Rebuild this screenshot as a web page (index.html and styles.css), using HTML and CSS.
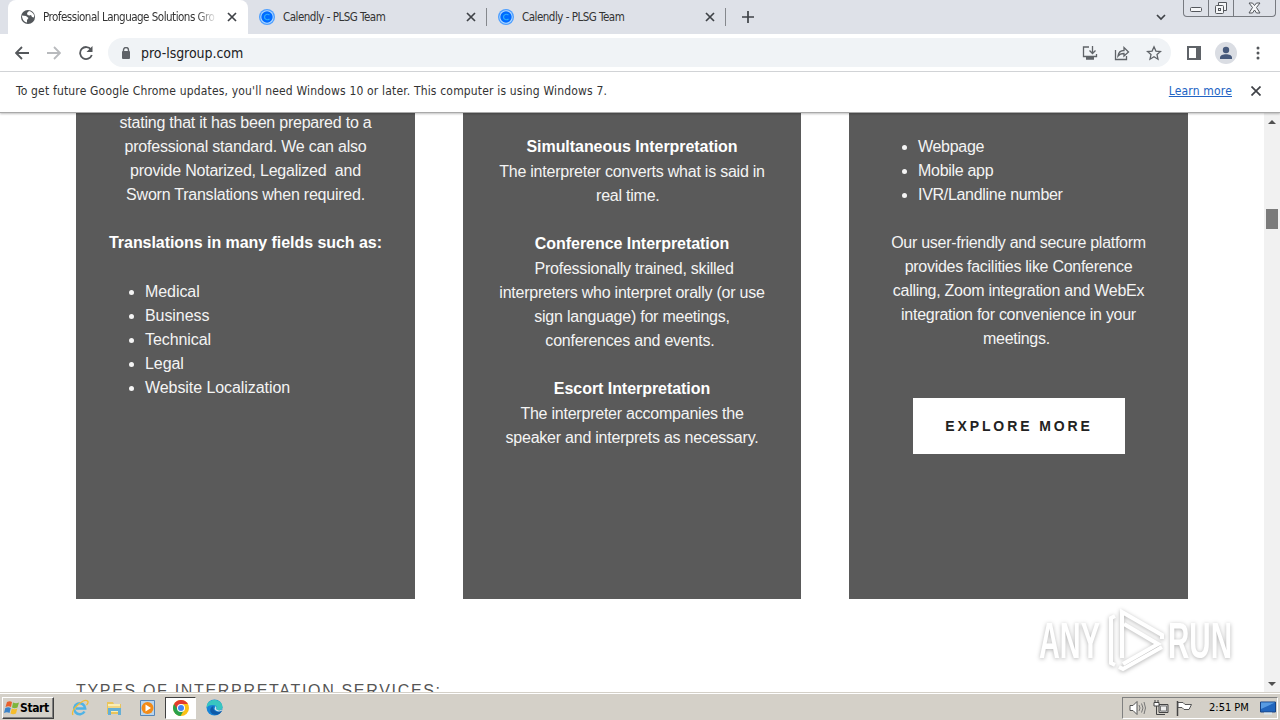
FILE: index.html
```html
<!DOCTYPE html>
<html lang="en">
  <head>
    <meta charset="UTF-8" />
    <title>Professional Language Solutions Group</title>
    <link rel="stylesheet" href="styles.css">
  </head>
  <body>
    <div class="tabs">
      <div class="tab active">
        <svg class="favicon" width="16" height="16" viewBox="0 0 16 16"><circle cx="8" cy="8" r="7" fill="#53575b"/><path d="M2 6.500l4 .5 2.500 2L7 11v2.500C4 13 2 10 2 6.500zM9 2L7 4l.5 2 2 .5L11 6l1 2 2 .5V6c-1-2-2.500-3.500-5-4z" fill="#fff"/></svg>
        <span class="title fade">Professional Language Solutions Gro</span>
        <svg class="close" width="10" height="10" viewBox="0 0 10 10"><path d="M1 1l8 8M9 1L1 9"/></svg>
      </div>
      <div class="tab second">
        <svg class="favicon" width="16" height="16" viewBox="0 0 16 16"><circle cx="8" cy="8" r="8" fill="#4e9fff"/><circle cx="8" cy="8" r="6.700" fill="#b8dcff"/><circle cx="8" cy="8" r="5.700" fill="#006bff"/><path d="M10.500 6C8.500 4.500 5.500 5.500 5.500 8s3 3.500 5 2" fill="none" stroke="#2fb0fa" stroke-width="1.200"/></svg>
        <span class="title">Calendly - PLSG Team</span>
        <svg class="close" width="10" height="10" viewBox="0 0 10 10"><path d="M1 1l8 8M9 1L1 9"/></svg>
      </div>
      <div class="tab">
        <svg class="favicon" width="16" height="16" viewBox="0 0 16 16"><circle cx="8" cy="8" r="8" fill="#4e9fff"/><circle cx="8" cy="8" r="6.700" fill="#b8dcff"/><circle cx="8" cy="8" r="5.700" fill="#006bff"/><path d="M10.500 6C8.500 4.500 5.500 5.500 5.500 8s3 3.500 5 2" fill="none" stroke="#2fb0fa" stroke-width="1.200"/></svg>
        <span class="title">Calendly - PLSG Team</span>
        <svg class="close" width="10" height="10" viewBox="0 0 10 10"><path d="M1 1l8 8M9 1L1 9"/></svg>
      </div>
      <svg class="plus" width="12" height="12" viewBox="0 0 12 12"><path d="M6 0v12M0 6h12"/></svg>
      <svg class="chevron" width="10" height="7" viewBox="0 0 10 7"><path d="M1 1l4 4 4-4"/></svg>
      <div class="window-buttons">
        <span class="min"><svg width="13" height="6" viewBox="0 0 13 6"><rect x=".5" y=".5" width="11" height="4" rx="1"/></svg></span>
        <span class="max"><svg width="14" height="14" viewBox="0 0 14 14"><path d="M4.500 4V1.500h8v8H10"/><rect x="1.500" y="4.500" width="8" height="8" rx="1"/><rect x="4.500" y="7.500" width="2" height="2"/></svg></span>
        <span class="quit"><svg width="13" height="12" viewBox="0 0 13 12"><path d="M1 1h3.500l2 2.500L8.500 1H12L8.500 5.500 12 11H8.500l-2-3-2 3H1l3.500-5.500z"/></svg></span>
      </div>
    </div>

    <div class="toolbar">
      <svg class="nav" width="14" height="14" viewBox="0 0 14 14"><path d="M14 7H1.500M7 1L1 7l6 6"/></svg>
      <svg class="nav disabled" width="14" height="14" viewBox="0 0 14 14"><path d="M0 7h12.500M7 1l6 6-6 6"/></svg>
      <svg class="nav" width="14" height="14" viewBox="0 0 14 14"><path d="M12 3.500A6 6 0 1 0 12.800 9"/><path d="M13.500 0v6h-6z" class="solid"/></svg>
      <div class="address">
        <svg width="10" height="12" viewBox="0 0 10 12"><path d="M2.500 5V3a2.500 2.500 0 0 1 5 0v2" fill="none" stroke="#5f6368" stroke-width="1.400"/><rect x="1" y="4" width="8" height="8" rx="1" fill="#5f6368"/></svg>
        <span class="url">pro-lsgroup.com</span>
        <svg class="line" width="16" height="16" viewBox="0 0 16 16"><path d="M7 2H1.500v9.500h13V9M4 14h8M10.500 1v7M7.500 5.500l3 3 3-3"/><path d="M4 12h8v2H4z" fill="#5f6368" stroke="none"/></svg>
        <svg class="line" width="16" height="16" viewBox="0 0 16 16"><path d="M1.500 5v9.500h11V11M4 11c.5-4 2.500-5.500 6-5.500V2.500L14.500 7 10 11V8.500c-3 0-4.500.5-6 2.500z"/></svg>
        <svg class="line star" width="16" height="16" viewBox="0 0 16 16"><path d="M8 1.800l1.900 4.300 4.600.4-3.500 3.100 1 4.600L8 11.800l-4 2.400 1-4.600-3.500-3.100 4.600-.4z"/></svg>
      </div>
      <svg class="side" width="14" height="14" viewBox="0 0 14 14"><path d="M1 1h12v12H1z" fill="none" stroke="#5f6368" stroke-width="2"/><path d="M9 1h4v12H9z" fill="#5f6368"/></svg>
      <svg class="profile" width="22" height="22" viewBox="0 0 22 22"><circle cx="11" cy="11" r="11" fill="#dadde3"/><circle cx="11" cy="8" r="3.200" fill="#46597b"/><path d="M5 17v-1.500c0-4.500 12-4.500 12 0V17z" fill="#46597b"/></svg>
      <svg class="dots" width="4" height="14" viewBox="0 0 4 14"><circle cx="2" cy="2" r="1.500"/><circle cx="2" cy="7" r="1.500"/><circle cx="2" cy="12" r="1.500"/></svg>
    </div>

    <div class="infobar">
      <span class="message">To get future Google Chrome updates, you'll need Windows 10 or later. This computer is using Windows 7.</span>
      <a href="#">Learn more</a>
      <svg class="close" width="10" height="10" viewBox="0 0 10 10"><path d="M0.500 0.500l9 9M9.500 0.500l-9 9"/></svg>
    </div>

    <div class="page">
      <div class="content">
        <div class="cards">
          <div class="card">
            <p>stating that it has been prepared to a<br>professional standard. We can also<br>provide Notarized, Legalized&nbsp; and<br>Sworn Translations when required.</p>
            <h3>Translations in many fields such as:</h3>
            <ul class="fields">
              <li>Medical</li>
              <li>Business</li>
              <li>Technical</li>
              <li>Legal</li>
              <li>Website Localization</li>
            </ul>
          </div>
          <div class="card interpretation">
            <h3>Simultaneous Interpretation</h3>
            <p>The interpreter converts what is said in<br>real time.&nbsp;&nbsp;</p>
            <h3>Conference Interpretation</h3>
            <p>&nbsp;Professionally trained, skilled<br>interpreters who interpret orally (or use<br>sign language) for meetings,<br>conferences and events.&nbsp;</p>
            <h3>Escort Interpretation</h3>
            <p>The interpreter accompanies the<br>speaker and interprets as necessary.</p>
          </div>
          <div class="card platform">
            <ul>
              <li>Webpage</li>
              <li>Mobile app</li>
              <li>IVR/Landline number</li>
            </ul>
            <p>Our user-friendly and secure platform<br>provides facilities like Conference<br>calling, Zoom integration and WebEx<br>integration for convenience in your<br>meetings.&nbsp;</p>
            <a class="button" href="#">EXPLORE MORE</a>
          </div>
        </div>
        <h2>TYPES OF INTERPRETATION SERVICES:</h2>
      </div>
      <div class="scrollbar">
        <span class="up"></span>
        <span class="thumb"></span>
        <span class="down"></span>
      </div>
      <svg class="watermark" width="204" height="70" viewBox="0 0 204 70">
        <text x="4" y="51" textLength="61" lengthAdjust="spacingAndGlyphs">ANY</text>
        <path d="M80 9l-4 2v45l4 2M87 51V5l40 23v4M89 17l34 20-35 20M127 40L88 62l-4-2"/>
        <text x="133" y="51" textLength="64" lengthAdjust="spacingAndGlyphs">RUN</text>
      </svg>
    </div>

    <div class="taskbar">
      <div class="start">
        <svg width="16" height="16" viewBox="0 0 16 16"><path d="M3 2q3-1.500 5 0L7 7Q4.500 5.500 1.500 7z" fill="#e9602b"/><path d="M9 2.500q3 1.500 6 0L13.500 7.500q-3 1.500-5.500 0z" fill="#7db53c"/><path d="M1.300 8q3-1.500 5.500 0l-1.300 5Q3 11.500 0 13z" fill="#3b83c9"/><path d="M7.800 8.500q3 1.500 5.500 0L12 13.500q-3 1.500-5.500 0z" fill="#f6bd2c"/></svg>
        <span>Start</span>
      </div>
      <div class="launch">
        <svg width="18" height="18" viewBox="0 0 18 18"><path d="M13.500 12.500A5.500 5.500 0 1 1 14.200 9.500H5" fill="none" stroke="#4fb3e6" stroke-width="2.500"/><path d="M2 16C-1 11 13-1 16.500 2c1 1 0 3-1 4" fill="none" stroke="#f0bc35" stroke-width="1.300"/></svg>
        <svg width="18" height="18" viewBox="0 0 18 18"><path d="M2 3h6l1 2h7v10H2z" fill="#e9c45c"/><path d="M3 5h12v8H3z" fill="#fbeeb2"/><path d="M3 9h13v7h-3v-4H6v4H3z" fill="#65afd5"/><path d="M3 8h12" stroke="#e6bd55"/></svg>
        <svg width="18" height="18" viewBox="0 0 18 18"><path d="M1.500 1.500h14v15h-14z" fill="#b9d5ee" stroke="#5686b8"/><circle cx="8.500" cy="9" r="6" fill="#f38b17"/><path d="M6.500 5.500v7L12 9z" fill="#fff"/></svg>
        <span class="running"><svg width="16" height="16" viewBox="0 0 16 16"><circle cx="8" cy="8" r="8" fill="#fbc116"/><path d="M8 8L1.100 4A8 8 0 0 0 7.500 16L11 10z" fill="#2aa14b"/><path d="M8 4h6.900a8 8 0 0 0-13.800 0L5 10z" fill="#e33b2e"/><circle cx="8" cy="8" r="4" fill="#fff"/><circle cx="8" cy="8" r="3" fill="#4285f4"/></svg></span>
        <svg width="17" height="17" viewBox="0 0 17 17"><circle cx="8.500" cy="8.500" r="8" fill="#1784d7"/><path d="M.8 7C2-1 16-1 16.500 8c0 4-5 4-6.500 2 2-2 0-4-3-4-3.500 0-5.500 1-6.200 3z" fill="#38c6c0"/><path d="M10 10c1.500 2 5 2 6.500 0-1 5-6 7-10 5-4-3-2-7 1-8-1 4 2 6 6 6z" fill="#0f5aa8"/><path d="M9.500 7c1 1 1 2 .5 3l1.500 1c2 1 4 0 5-1l-1 2c-3 1-6 0-7-2z" fill="#d6e8ec"/></svg>
      </div>
      <div class="tray">
        <svg width="17" height="16" viewBox="0 0 17 16"><path d="M1 5.500h3L8 1.500v13l-4-4H1z" fill="#fff" stroke="#555"/><path d="M10 5q2 3 0 6M12.500 3.500q3 4.500 0 9M15 2q3 6 0 12" fill="none" stroke="#777"/></svg>
        <svg width="16" height="16" viewBox="0 0 16 16"><path d="M6 4.500h9v8H6z" fill="#ccc" stroke="#444"/><path d="M7.500 6h6v5h-6z" fill="#eee" stroke="#777"/><path d="M1 2.500h5V6H1zM2 0v3M5 0v3" fill="#fff" stroke="#444"/><path d="M3.500 6v8.500H12" fill="none" stroke="#444"/></svg>
        <svg width="17" height="16" viewBox="0 0 17 16"><path d="M1.500 1v15" stroke="#444" stroke-width="1.500"/><path d="M2 2.500h5l2 2h6.500L13 9.500H8l-2-2H2z" fill="#fff" stroke="#555"/></svg>
        <span class="clock">2:51 PM</span>
        <svg class="desktop" width="16" height="14" viewBox="0 0 16 14"><path d="M.5 1h15v10H.5z" fill="#2266bd" stroke="#174384"/><path d="M1 1.500h14L1 8z" fill="#579be2"/><path d="M4 12.500h8" stroke="#d8e4ed" stroke-width="2"/></svg>
      </div>
    </div>
  </body>
</html>
```
FILE: styles.css
```css
* {
  box-sizing: border-box;
}

body {
  display: flex;
  flex-direction: column;
  width: 1280px;
  height: 720px;
  margin: 0;
  overflow: hidden;
  background: #fff;
  color: #333;
  font-family: "DejaVu Sans Condensed", "DejaVu Sans", sans-serif;
  font-stretch: condensed;
  font-size: 11px;
}

svg {
  display: block;
  flex: none;
}

/* browser tabs */
.tabs {
  display: flex;
  align-items: center;
  height: 34px;
  flex: none;
  padding-left: 8px;
  background: #dee1e8;
}

.tab {
  display: flex;
  align-items: center;
  width: 239px;
  height: 18px;
  padding: 0 10px 0 12px;
  border-right: 1px solid #85888d;
}

.tab.active {
  width: 240px;
  height: 34px;
  padding-right: 11px;
  border: none;
  border-radius: 8px 8px 0 0;
  background: #fff;
}

.tab.second {
  padding-left: 11px;
}

.tab.active .favicon {
  margin-right: 7px;
}

.favicon {
  margin-right: 8px;
}

.tab:nth-child(3) .favicon {
  margin-left: -1px;
}

.title {
  flex: 1;
  overflow: hidden;
  white-space: nowrap;
  font-size: 11.5px;
  letter-spacing: -0.5px;
}

.fade {
  margin-right: 6px;
  -webkit-mask-image: linear-gradient(to right, #000 86%, transparent 98%);
}

.close,
.plus,
.chevron {
  fill: none;
  stroke: #3f4247;
  stroke-width: 1.7;
}

.plus {
  margin-left: 16px;
}

.chevron {
  margin-left: auto;
  margin-right: 17px;
}

.window-buttons {
  display: flex;
  align-self: flex-start;
  width: 93px;
  height: 17px;
  margin-right: 4px;
  border: 1px solid #777a80;
  border-top: none;
  border-radius: 0 0 4px 4px;
  fill: #f5f6f8;
  stroke: #54575c;
}

.window-buttons span {
  display: flex;
  align-items: center;
  justify-content: center;
  width: 25px;
  border-right: 1px solid #777a80;
}

.window-buttons .min {
  padding-top: 4px;
}

.window-buttons .quit {
  flex: 1;
  border: none;
}

/* address row */
.toolbar {
  display: flex;
  align-items: center;
  height: 38px;
  flex: none;
  padding: 0 17px 0 15px;
  border-bottom: 1px solid #d5d7da;
}

.nav {
  margin-right: 18px;
  fill: none;
  stroke: #54575b;
  stroke-width: 1.8;
}

.nav .solid {
  fill: #54575b;
  stroke: none;
}

.nav.disabled {
  stroke: #b8babd;
}

.nav:nth-child(3) {
  margin-right: 15px;
}

.address {
  display: flex;
  align-items: center;
  width: 1063px;
  height: 29px;
  padding: 0 9px 0 13px;
  border-radius: 15px;
  background: #f0f3f6;
}

.url {
  flex: 1;
  margin-left: 10px;
  color: #202124;
  font-size: 14px;
  letter-spacing: -0.05px;
}

.line {
  margin-left: 16px;
  fill: none;
  stroke: #5f6368;
  stroke-width: 1.3;
}

.side {
  margin-left: 16px;
}

.profile {
  margin-left: 14px;
}

.dots {
  margin-left: auto;
  margin-right: 3px;
  fill: #54575b;
}

.infobar {
  position: relative;
  z-index: 1;
  display: flex;
  align-items: center;
  height: 41px;
  flex: none;
  padding: 0 19px 2px 16px;
  border-bottom: 1px solid #a9a9a9;
  box-shadow: 0 1px 2px rgba(0, 0, 0, 0.25);
  font-size: 12px;
  letter-spacing: 0.17px;
}

.message {
  flex: 1;
  white-space: nowrap;
}

.infobar a {
  color: #2163c4;
}

.infobar .close {
  margin-left: 19px;
}

/* web page */
.page {
  position: relative;
  display: flex;
  height: 579px;
  flex: none;
  overflow: hidden;
}

.content {
  flex: 1;
  padding: 0 76px;
  font-family: "Liberation Sans", Arial, sans-serif;
  font-size: 16px;
  line-height: 24px;
}

.cards {
  display: grid;
  grid-template-columns: 339px 338px 339px;
  column-gap: 48px;
}

.card {
  height: 486px;
  padding-top: 22px;
  background: #5a5a5a;
  color: #fff;
  text-align: center;
  white-space: nowrap;
}

.card:first-child {
  padding-top: 0;
}

.card:first-child p {
  margin-top: -2px;
}

.card p,
.card ul {
  margin: 0 0 24px;
}

.card p {
  color: #f4f4f4;
  letter-spacing: -0.23px;
}

.card h3 {
  height: 25px;
  margin: 0;
  font-size: 16px;
  letter-spacing: -0.05px;
}

.card ul {
  padding-left: 69px;
  color: #f4f4f4;
  text-align: left;
}

.card .fields {
  margin-top: 24px;
  letter-spacing: -0.07px;
}

.platform ul {
  letter-spacing: -0.3px;
}

.card.platform p {
  margin-bottom: 47px;
  letter-spacing: -0.28px;
}

.button {
  display: block;
  width: 212px;
  height: 56px;
  margin: 0 auto;
  padding-left: 1px;
  background: #fff;
  color: #222;
  font-size: 14px;
  font-weight: bold;
  line-height: 56px;
  letter-spacing: 2.9px;
  text-decoration: none;
}

.content h2 {
  margin: 80px 0 0;
  color: #555;
  font-size: 16px;
  font-weight: normal;
  letter-spacing: 1.68px;
}

.scrollbar {
  display: flex;
  flex-direction: column;
  align-items: center;
  width: 16px;
  padding: 7px 0 6px;
  background: #f1f1f1;
}

.up,
.down {
  border: 4px solid transparent;
  border-top: none;
  border-bottom-color: #505050;
}

.down {
  margin-top: auto;
  border-top: 4px solid #505050;
  border-bottom: none;
}

.thumb {
  width: 12px;
  height: 20px;
  margin-top: 85px;
  background: #7b7b7b;
}

.watermark {
  position: absolute;
  left: 1035px;
  top: 494px;
  overflow: visible;
  fill: #fff;
  filter: drop-shadow(0 1px 2px rgba(0, 0, 0, 0.3));
}

.watermark text {
  font-family: "Liberation Sans", Arial, sans-serif;
  font-size: 50px;
  font-weight: bold;
}

.watermark path {
  fill: none;
  stroke: #fff;
  stroke-width: 4;
}

/* windows taskbar */
.taskbar {
  display: flex;
  align-items: center;
  height: 28px;
  flex: none;
  padding: 2px 2px 0;
  border-top: 1px solid #d4d0c8;
  box-shadow: inset 0 1px #fff;
  background: #d4d0c8;
  color: #000;
}

.start {
  display: flex;
  align-items: center;
  width: 52px;
  height: 22px;
  padding-left: 1px;
  border: 1px solid;
  border-color: #fff #404040 #404040 #fff;
  box-shadow: inset -1px -1px #808080;
  font-size: 12px;
  font-weight: bold;
}

.start span {
  letter-spacing: -0.4px;
}

.launch {
  display: flex;
  align-items: center;
  margin-left: 17px;
}

.launch svg {
  margin-right: 16px;
}

.running {
  display: flex;
  align-items: center;
  justify-content: center;
  width: 31px;
  height: 22px;
  margin-left: -8px;
  margin-right: 10px;
  border: 1px solid;
  border-color: #404040 #fff #fff #404040;
  background: #fff;
}

.launch .running svg {
  margin: 0;
}

.tray {
  display: flex;
  align-items: center;
  width: 156px;
  height: 22px;
  margin-left: auto;
  padding: 0 1px 0 6px;
  border: 1px solid;
  border-color: #808080 #fff #fff #808080;
}

.tray svg {
  margin-right: 7px;
}

.clock {
  margin-left: 9px;
  white-space: nowrap;
}

.tray .desktop {
  margin-left: auto;
  margin-right: 0;
}
```
